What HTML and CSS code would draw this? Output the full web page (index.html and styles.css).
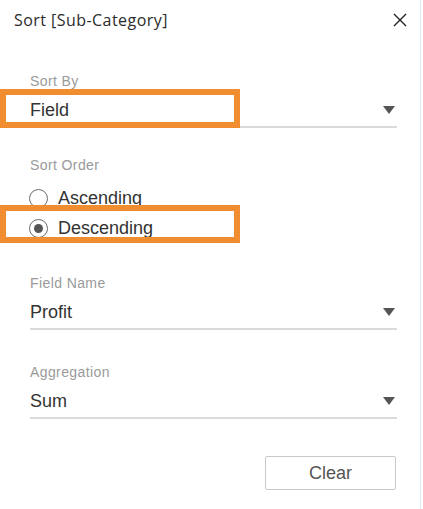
FILE: index.html
```html
<!DOCTYPE html>
<html>
<head>
<meta charset="utf-8">
<link rel="stylesheet" href="styles.css">
</head>
<body>
<div class="panel">
  <div class="header">
    <span class="title">Sort [Sub-Category]</span>
    <svg class="close" width="14" height="14" viewBox="0 0 14 14"><path d="M1 1 L13 13 M13 1 L1 13" stroke="#222" stroke-width="1.4" fill="none"/></svg>
  </div>
  <div class="content">
    <div class="group g-sortby">
      <div class="label">Sort By</div>
      <div class="select">
        <span class="value">Field</span>
        <span class="arrow"></span>
        <div class="highlight hl-field"></div>
      </div>
    </div>
    <div class="group g-order">
      <div class="label">Sort Order</div>
      <div class="radios">
        <div class="radio-row"><span class="radio"></span><span class="value">Ascending</span></div>
        <div class="radio-row"><span class="radio checked"></span><span class="value">Descending</span><div class="highlight hl-desc"></div></div>
      </div>
    </div>
    <div class="group g-field">
      <div class="label">Field Name</div>
      <div class="select">
        <span class="value">Profit</span>
        <span class="arrow"></span>
      </div>
    </div>
    <div class="group g-agg">
      <div class="label">Aggregation</div>
      <div class="select">
        <span class="value">Sum</span>
        <span class="arrow"></span>
      </div>
    </div>
    <div class="actions">
      <button class="btn">Clear</button>
    </div>
  </div>
</div>
</body>
</html>
```
FILE: styles.css
```css
html, body {
  margin: 0;
  padding: 0;
  background: #ffffff;
}
.panel {
  box-sizing: border-box;
  width: 421px;
  height: 509px;
  border-right: 1px solid #dbe7f3;
  font-family: "Liberation Sans", Arial, sans-serif;
  color: #333333;
}
.header {
  height: 40px;
  display: flex;
  align-items: center;
  justify-content: space-between;
  padding: 0 13px 0 14px;
}
.title {
  font-family: "Open Sans", "Liberation Sans", sans-serif;
  font-size: 16px;
  letter-spacing: 0.45px;
  color: #2b2b2b;
}
.close {
  display: block;
}
.content {
  padding: 0 23px 0 30px;
}
.group {
  position: relative;
}
.g-sortby { margin-top: 33px; }
.g-order { margin-top: 29px; }
.g-field { margin-top: 32px; }
.g-agg { margin-top: 34px; }
.label {
  font-size: 14px;
  line-height: 16px;
  color: #9a9a9a;
  letter-spacing: 0.4px;
}
.select {
  position: relative;
  margin-top: 7px;
  display: flex;
  align-items: center;
  justify-content: space-between;
  height: 28px;
  padding-bottom: 2px;
  border-bottom: 2px solid #dadada;
}
.value {
  font-size: 18px;
  line-height: 28px;
  color: #333333;
}
.arrow {
  width: 0;
  height: 0;
  border-left: 6px solid transparent;
  border-right: 6px solid transparent;
  border-top: 8px solid #555555;
  margin-right: 2px;
}
.radios {
  margin-top: 10px;
}
.radio-row {
  position: relative;
  height: 30px;
  display: flex;
  align-items: center;
}
.radio {
  box-sizing: border-box;
  width: 19px;
  height: 19px;
  margin-left: -1px;
  border: 1.5px solid #6a6a6a;
  border-radius: 50%;
  display: flex;
  align-items: center;
  justify-content: center;
  margin-right: 10px;
}
.radio.checked::after {
  content: "";
  width: 9px;
  height: 9px;
  border-radius: 50%;
  background: #555555;
}
.highlight {
  position: absolute;
  box-sizing: border-box;
  left: -30px;
  width: 240px;
  border: 6px solid #f08d2e;
  pointer-events: none;
}
.hl-field {
  top: -7px;
  height: 39px;
}
.hl-desc {
  top: -8px;
  height: 38px;
}
.actions {
  margin-top: 37px;
  display: flex;
  justify-content: flex-end;
}
.btn {
  width: 131px;
  height: 34px;
  margin-right: 1px;
  background: #ffffff;
  border: 1px solid #c9c9c9;
  border-radius: 2px;
  font-family: "Liberation Sans", Arial, sans-serif;
  font-size: 18px;
  color: #555555;
  padding: 0;
}
```
